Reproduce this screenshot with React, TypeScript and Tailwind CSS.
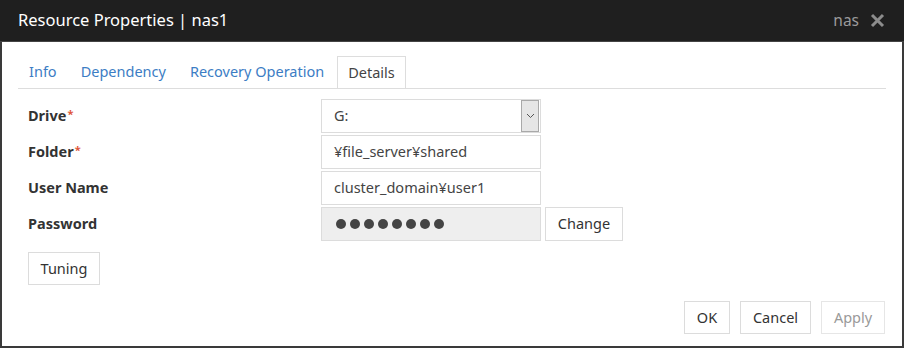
import React from 'react';

const font = { fontFamily: '"Noto Sans", "Liberation Sans", sans-serif' };

const tabs = ['Info', 'Dependency', 'Recovery Operation', 'Details'];

const Field: React.FC<{ label: string; required?: boolean; children: React.ReactNode }> = ({ label, required, children }) => (
  <div className="flex items-center h-[34px]">
    <div className="w-[293px] text-[14.5px] font-bold text-[#333]">
      {label}
      {required && <sup className="text-[#e0553a] font-bold text-[11px] ml-[1px] relative top-[-3px]">*</sup>}
    </div>
    {children}
  </div>
);

export default function App() {
  return (
    <div className="w-[904px] h-[348px] bg-white border-x-2 border-b-2 border-[#3a3a3a] flex flex-col" style={font}>
      {/* Title bar */}
      <div className="h-[42px] bg-[#1f1f1f] flex items-center pl-[18px] pr-[19px] -mx-[2px] border-b border-[#444]">
        <span className="text-white text-[16.5px]">Resource Properties | nas1</span>
        <span className="ml-auto text-[#9a9a9a] text-[15.5px]">nas</span>
        <svg className="ml-[11px]" width="15" height="15" viewBox="0 0 15 15">
          <path d="M2 2 L13 13 M13 2 L2 13" stroke="#8c8c8c" strokeWidth="3" strokeLinecap="butt" />
        </svg>
      </div>

      <div className="flex-1 flex flex-col px-[16px]">
        {/* Tabs */}
        <div className="mt-[14px] flex border-b border-[#dddddd]">
          {tabs.map((t) => {
            const active = t === 'Details';
            return (
              <div
                key={t}
                className={
                  active
                    ? 'px-[10px] h-[32px] flex items-center mr-[2px] border border-b-0 border-[#dddddd] bg-white text-[#444] text-[14.5px] -mb-px'
                    : 'px-[10px] h-[32px] flex items-center mr-[2px] border border-transparent text-[#3c7dc4] text-[14.5px]'
                }
              >
                {t}
              </div>
            );
          })}
        </div>

        {/* Form */}
        <div className="pl-[10px] mt-[10px] flex flex-col gap-[2px]">
          <Field label="Drive" required>
            <div className="w-[220px] h-[34px] border border-[#dcdcdc] flex items-center pl-[12px] pr-[1px] text-[14.5px] text-[#444]">
              <span>G:</span>
              <div className="ml-auto w-[18px] h-[32px] bg-[#e6e6e6] border border-[#a9a9a9] flex items-center justify-center">
                <svg width="9" height="6" viewBox="0 0 9 6">
                  <path d="M1 1 L4.5 4.5 L8 1" stroke="#555" strokeWidth="1" fill="none" />
                </svg>
              </div>
            </div>
          </Field>
          <Field label="Folder" required>
            <div className="w-[220px] h-[34px] border border-[#dcdcdc] flex items-center pl-[12px] text-[14.5px] text-[#444]">
              ¥file_server¥shared
            </div>
          </Field>
          <Field label="User Name">
            <div className="w-[220px] h-[34px] border border-[#dcdcdc] flex items-center pl-[12px] text-[14.5px] text-[#444]">
              cluster_domain¥user1
            </div>
          </Field>
          <Field label="Password">
            <div className="w-[220px] h-[34px] border border-[#dcdcdc] bg-[#eeeeee] flex items-center pl-[14px] gap-[4px]">
              {Array.from({ length: 8 }).map((_, i) => (
                <span key={i} className="w-[10px] h-[10px] rounded-full bg-[#444]" />
              ))}
            </div>
            <button className="ml-[4px] w-[78px] h-[34px] border border-[#dcdcdc] bg-white text-[14.5px] text-[#333]">
              Change
            </button>
          </Field>
        </div>

        <div className="pl-[10px] mt-[11px]">
          <button className="w-[72px] h-[33px] border border-[#dcdcdc] bg-white text-[14.5px] text-[#333]">Tuning</button>
        </div>

        {/* Footer buttons */}
        <div className="mt-[16px] flex justify-end gap-[10px] pr-[1px]">
          <button className="w-[46px] h-[33px] border border-[#dcdcdc] bg-white text-[14.5px] text-[#333]">OK</button>
          <button className="w-[71px] h-[33px] border border-[#dcdcdc] bg-white text-[14.5px] text-[#333]">Cancel</button>
          <button className="w-[64px] h-[33px] border border-[#e6e6e6] bg-white text-[14.5px] text-[#999]">Apply</button>
        </div>
      </div>
    </div>
  );
}
